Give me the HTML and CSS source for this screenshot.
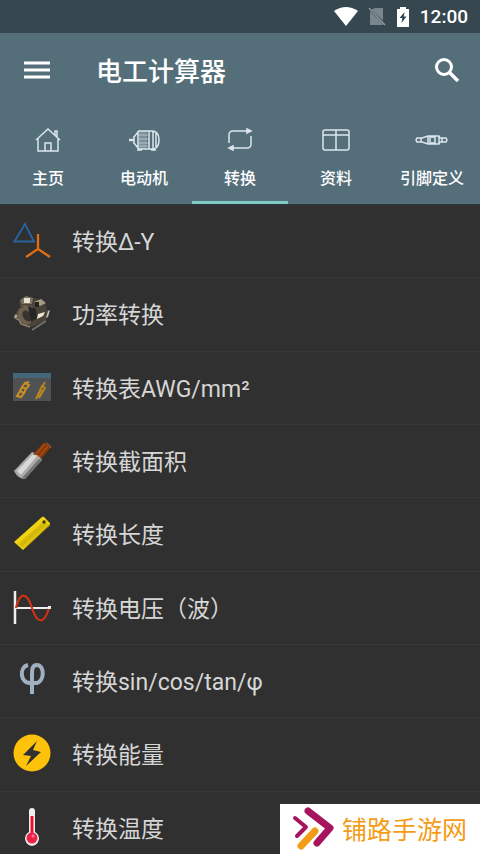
FILE: index.html
```html
<!DOCTYPE html>
<html lang="zh-CN">
<head>
<meta charset="utf-8">
<meta name="viewport" content="width=device-width, initial-scale=1">
<title>电工计算器</title>
<link rel="stylesheet" href="styles.css">
</head>
<body>
<div class="app">
  <div class="status">
    <svg width="24" height="20" viewBox="0 0 24 20" aria-hidden="true"><path d="M0 4Q12-4 24 4L12 19Z" fill="#fff"/></svg>
    <svg width="18" height="20" viewBox="0 0 18 20" aria-hidden="true"><path d="M7 1H15V13.500L3.500 2.500ZM2 4L15 17V18H2Z" fill="#78868d"/><path d="M1 1L17 18" stroke="#8a979d" stroke-width="1.500"/></svg>
    <svg width="14" height="20" viewBox="0 0 14 20" aria-hidden="true"><path d="M4 0H10V2H13V20H1V2H4Z" fill="#fff"/><path d="M8.500 5L3.500 11H6.300L5.500 16L10.500 9.500H7.800Z" fill="#33454e"/></svg>
    <span class="clock">12:00</span>
  </div>
  <header class="header">
    <div class="toolbar">
      <button class="icon-button" aria-label="菜单"><svg width="26" height="20" viewBox="0 0 26 20"><path d="M0 3H26M0 10H26M0 17H26" stroke="#fff" stroke-width="3"/></svg></button>
      <h1 class="title">电工计算器</h1>
      <button class="icon-button" aria-label="搜索"><svg width="26" height="26" viewBox="0 0 26 26" fill="none" stroke="#fff"><circle cx="10" cy="10" r="7.500" stroke-width="3"/><path d="M15.500 15.500L24 24" stroke-width="3.500"/></svg></button>
    </div>
    <nav class="tabs">
      <a class="tab" href="#home"><svg width="34" height="26" viewBox="0 0 34 26"><path d="M5 13L17 2L29 13M7 12V24H27V12M24 8V4H26V10M14 24V16H20V24"/></svg>主页</a>
      <a class="tab" href="#motor"><svg width="34" height="26" viewBox="0 0 34 26"><path stroke-width="2.500" d="M2 13H7"/><path d="M7 9V17M7 10L11 5M7 16L11 21M11 4H26M11 22H26M11 4V22M26 4Q32 5 32 13T26 22M22 4V22M26 4V22M29 6V20M10 23H15M24 23H29"/><path class="fine" d="M13 4V22M15 4V22M17 4V22M19 4V22M11 8H22M11 12H22M11 16H22M11 19H22"/></svg>电动机</a>
      <a class="tab active" href="#convert" aria-current="page"><svg width="34" height="26" viewBox="0 0 34 26"><path d="M6 16V8Q6 4 10 4H26M28 9V17Q28 21 24 21H8"/><path class="solid" d="M24 2L28 4L24 6ZM10 19L6 21L10 23Z"/></svg>转换</a>
      <a class="tab" href="#data"><svg width="34" height="26" viewBox="0 0 34 26"><rect x="4" y="3" width="26" height="20" rx="2"/><path d="M4 8H30M17 3V23"/></svg>资料</a>
      <a class="tab" href="#pins"><svg width="34" height="26" viewBox="0 0 34 26"><path d="M2 11H7L13 9H24L25 11H31L32 13L31 15H25L24 17H13L7 15H2L1 13ZM6 11V15M13 9V17M15 10H20V16H15ZM24 9V17M27 11V15"/></svg>引脚定义</a>
    </nav>
  </header>
  <main>
    <ul class="list">
      <li><a class="row" href="#delta"><svg class="picture" viewBox="0 0 40 40" fill="none"><path d="M2.500 20.500L13 3L22 20.500Z" stroke="#28629b" stroke-width="2"/><path d="M26 13V28L14 36M26 28L38 36" stroke="#e36c14" stroke-width="2.300"/></svg>转换Δ-Y</a></li>
      <li><a class="row" href="#power"><svg class="picture" viewBox="0 0 40 40"><path d="M3 20L8 13L7 8L12 3L22 4L33 8L34 14L37 18L34 26L20 33L9 29Z" fill="#4a4339"/><path d="M8 6L14 2L21 4L20 10L10 10Z" fill="#80745f"/><path d="M12 4H18V9H12Z" fill="#e4e1d5"/><path d="M22 8L29 5L34 9L28 12Z" fill="#a79b80"/><path d="M23 8H27V13H23Z" fill="#24221f"/><path d="M9 11L20 12L22 15L14 16Z" fill="#6f644f"/><ellipse cx="13" cy="22" rx="7" ry="9" transform="rotate(-30 13 22)" fill="#6d614d"/><ellipse cx="15" cy="22" rx="4" ry="6" transform="rotate(-30 15 22)" fill="#38332d"/><path d="M16 12L24 15L25 24L19 28Z" fill="#262725"/><path d="M26 20L33 18L31 22L25 25Z" fill="#f0e6cf"/><path d="M36 17L38 16L36 23L34 24Z" fill="#c8c4ac"/><path d="M2 23L7 26L9 30L18 33" fill="none" stroke="#91866f" stroke-width="1.500"/><path d="M20 36L34 27" stroke="#777870" stroke-width="1.500"/><circle cx="4" cy="22" r="1.500" fill="#b5ae9f"/></svg>功率转换</a></li>
      <li><a class="row" href="#awg"><svg class="picture" viewBox="0 0 40 40"><path d="M1 5H39V33H1Z" fill="#4f5153"/><path d="M1 5H39V10H1Z" fill="#456778"/><path d="M5 28L8 23L12 25L9 29ZM8 23L10 19L14 21L12 25M10 19L13 15L17 17L14 21M13 15L17 14" fill="none" stroke="#c98f20" stroke-width="2"/><path d="M24 31L30 18L33 20L27 30M25 29L29 27M26 26L30 25M28 23L32 22M30 19L33 14" fill="none" stroke="#b98521" stroke-width="1.800"/></svg>转换表AWG/mm²</a></li>
      <li><a class="row" href="#section"><svg class="picture" viewBox="0 0 40 40"><path d="M2 30L20 11Q26 12 30 19L13 38Q6 38 2 30Z" fill="#aaa"/><path d="M5 30L21 13L25 15L9 34Z" fill="#d8d8d8"/><path d="M10 37L27 18L30 19L13 38Z" fill="#737373"/><path d="M21 14L31 2Q36 2 39 6L29 18Q27 13 21 14Z" fill="#883804"/><path d="M24 13L33 3M27 16L36 5" stroke="#a84a12" stroke-width="1.500"/><path d="M34 2Q38 3 39 7" fill="none" stroke="#8b6b58"/></svg>转换截面积</a></li>
      <li><a class="row" href="#length"><svg class="picture" viewBox="0 0 40 40"><path d="M2 28L30 3Q32 2 33 4L38 9Q38 12 36 13L11 36Z" fill="#efd315"/><path d="M5 30L33 6L36 11L11 34Z" fill="#dfc10c"/><path d="M11 36L37 11" stroke="#a68d00"/><path d="M9 31L33 10" stroke="#c9ad05" stroke-dasharray="1 1" stroke-width="3"/><circle cx="32" cy="8" r="1.700" fill="#3c3710"/></svg>转换长度</a></li>
      <li><a class="row" href="#wave"><svg class="picture" viewBox="0 0 40 40" fill="none"><path d="M3 3V36" stroke="#eee" stroke-width="2.500"/><path d="M3 20H37" stroke="#eee" stroke-width="2"/><path d="M4 20C8 3 15 4 20 20S32 37 37 20" stroke="#cf3213" stroke-width="2.200"/><path d="M36 18H39V21H36Z" fill="#eee"/></svg>转换电压（波）</a></li>
      <li><a class="row" href="#trig"><svg class="picture" viewBox="0 0 40 40" fill="none"><path d="M16 4C7 6 8 22 18 22H23C33 22 33 4 25 4C20 4 20 9 20 13V33" stroke="#9fb1c0" stroke-width="4"/></svg>转换sin/cos/tan/φ</a></li>
      <li><a class="row" href="#energy"><svg class="picture" viewBox="0 0 40 40"><circle cx="20" cy="19" r="18.500" fill="#ffc20a"/><path d="M25 7L11 21L19 22L14 32L29 18L21 16Z" fill="#30302e"/></svg>转换能量</a></li>
      <li><a class="row" href="#temperature"><svg class="picture" viewBox="0 0 40 40"><path d="M17 3Q17 0 20 0T23 3V24Q27 26 27 31Q26 37 20 38Q14 37 13 31Q13 26 17 24Z" fill="#eee"/><path d="M18.500 8H21.500V25H18.500Z" fill="#e91532"/><circle cx="20" cy="30" r="5.500" fill="#ef2146"/><circle cx="21" cy="28" r="1.500" fill="#ff8298"/></svg>转换温度</a></li>
    </ul>
  </main>
  <aside class="badge">
    <svg width="44" height="44" viewBox="0 0 44 44" fill="none" stroke-linecap="round" stroke-linejoin="round"><path d="M3 12L14 21L5 30" stroke="#a5145d" stroke-width="4"/><path d="M16 5L38 22L25 37" stroke="#a5145d" stroke-width="7"/><path d="M23 25L9 40" stroke="#f39c16" stroke-width="7"/></svg>
    <span>铺路手游网</span>
  </aside>
</div>
</body>
</html>
```
FILE: styles.css
```css
* { box-sizing: border-box; }

body {
  margin: 0;
  background: #303030;
  font-family: Roboto, "Noto Sans CJK SC", sans-serif;
}

.app {
  position: relative;
  height: 100vh;
  overflow: hidden;
}

.status {
  display: flex;
  align-items: center;
  justify-content: flex-end;
  gap: 10px;
  height: 33px;
  padding-right: 12px;
  background: #36474f;
  color: #fff;
}

.clock {
  font-size: 19px;
  font-weight: 500;
}

.header {
  background: #546e7a;
  color: #fff;
  border-bottom: 1px solid #29383e;
}

.toolbar {
  display: flex;
  align-items: center;
  height: 74px;
  padding: 0 20px 0 24px;
}

.icon-button {
  display: flex;
  padding: 0;
  border: 0;
  background: none;
}

.title {
  flex: 1;
  margin: 0 0 0 46px;
  padding-bottom: 2px;
  font-size: 26px;
  font-weight: 500;
}

.tabs {
  display: grid;
  grid-template-columns: repeat(5, 1fr);
}

.tab {
  display: flex;
  flex-direction: column;
  align-items: center;
  gap: 14px;
  height: 97px;
  padding-top: 20px;
  border-bottom: 3px solid transparent;
  color: #fff;
  font-size: 16px;
  font-weight: 500;
  line-height: 24px;
  text-decoration: none;
}

.tab.active { border-color: #80cbc4; }

.tab svg {
  flex: none;
  fill: none;
  stroke: #dce7eb;
  stroke-width: 1.5;
}

.tab .fine { stroke-width: 0.6; }

.tab .solid { fill: #dce7eb; }

.list {
  display: grid;
  grid-auto-rows: 1fr;
  min-height: 660px;
  margin: 0;
  padding: 0;
  list-style: none;
}

.list li {
  display: grid;
  border-bottom: 1px solid #393939;
}

.row {
  display: flex;
  align-items: center;
  gap: 20px;
  padding: 0 12px 2px;
  color: #d6d6d6;
  font-size: 23px;
  text-decoration: none;
}

.picture {
  flex: none;
  width: 40px;
  height: 40px;
  margin-top: 2px;
}

.badge {
  position: absolute;
  right: 0;
  bottom: 0;
  display: flex;
  align-items: center;
  gap: 6px;
  width: 200px;
  height: 50px;
  padding: 0 0 2px 12px;
  background: #fff;
  color: #f39c16;
  font-size: 25px;
}
```
